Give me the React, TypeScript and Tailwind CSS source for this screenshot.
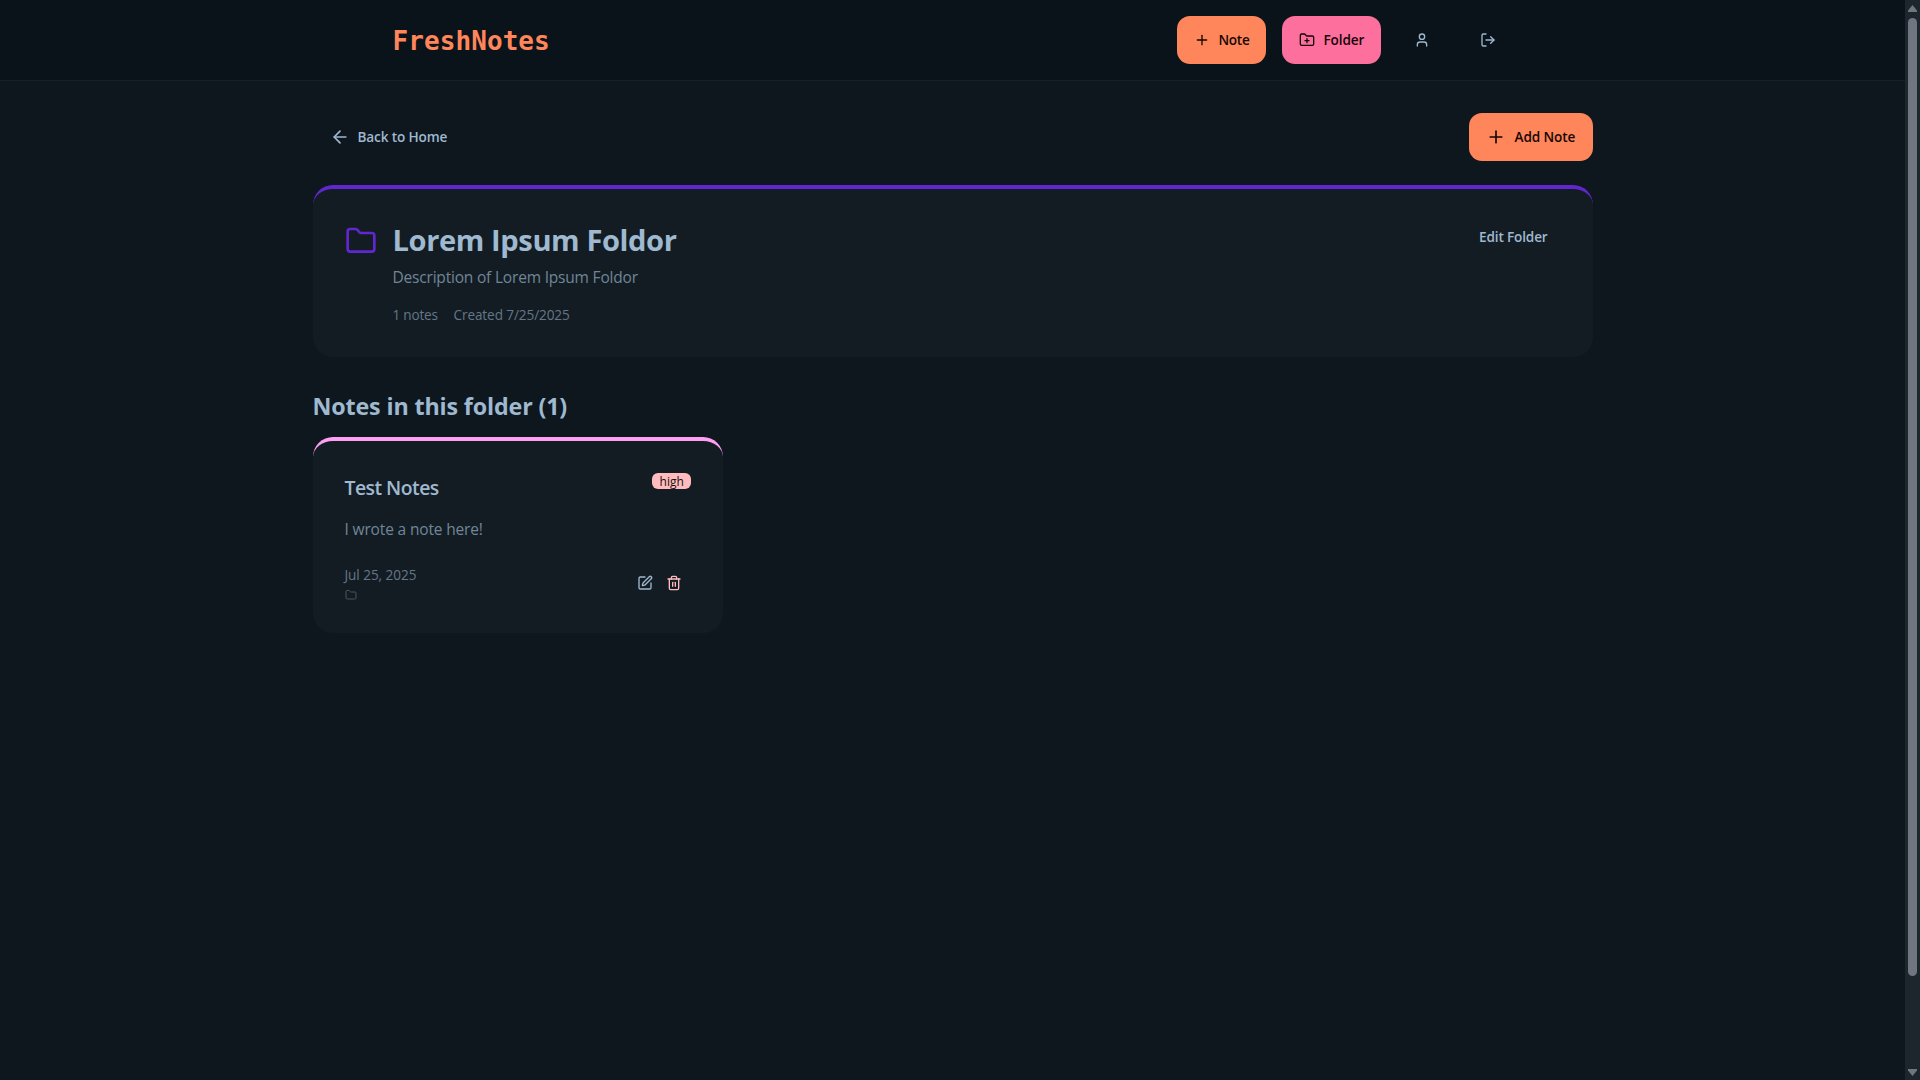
import { ArrowLeft, Folder, FolderPlus, LogOut, Plus, SquarePen, Trash2, User } from "lucide-react";

function Header() {
  return (
    <header className="h-[81px] border-b border-[#14232a] bg-[#091319]">
      <div className="mx-auto flex h-20 w-[1152px] items-center justify-between px-4">
        <h1 className="pt-[3px] font-['DejaVu_Sans_Mono',monospace] text-[26px] font-bold tracking-[0.08px] text-[#ff865b]">FreshNotes</h1>
        <nav className="flex items-center gap-4">
          <button className="flex h-12 w-[89px] items-center gap-2.5 rounded-[13px] bg-[#ff865b] pl-[17px] text-[13.58px] font-semibold text-[#160603]">
            <Plus className="size-4 shrink-0" />
            <span className="-ml-px tracking-[-0.3px]">Note</span>
          </button>
          <button className="flex h-12 w-[99px] items-center gap-[9px] rounded-[13px] bg-[#fd6f9c] pl-[17px] text-[13.58px] font-semibold text-[#160409]">
            <FolderPlus className="size-4 shrink-0" />
            <span className="tracking-[-0.12px]">Folder</span>
          </button>
          <button className="flex h-12 w-[50px] items-center justify-center text-[#9fb9d0]">
            <User className="size-4" />
          </button>
          <button className="flex h-12 w-[50px] items-center justify-center text-[#9fb9d0]">
            <LogOut className="size-4" />
          </button>
        </nav>
      </div>
    </header>
  );
}

function FolderCard() {
  return (
    <section className="mt-6 flex h-[172px] items-start justify-between rounded-[20px] border-t-4 border-[#5f27cd] bg-[#141c23] px-8 pt-8">
      <div className="flex items-start gap-4">
        <Folder className="mt-1 size-8 text-[#5f27cd]" />
        <div>
          <h2 className="mt-px text-[29.1px] leading-9 font-bold tracking-[-0.4px]">Lorem Ipsum Foldor</h2>
          <p className="mt-[7px] text-[15.52px] leading-6 tracking-[-0.2px] text-[#6f8698]">Description of Lorem Ipsum Foldor</p>
          <div className="mt-4 flex gap-4 text-[13.58px] leading-5 whitespace-nowrap text-[#637788]">
            <span className="w-[45px] tracking-[-0.21px]">1 notes</span>
            <span className="tracking-[-0.1px]">Created 7/25/2025</span>
          </div>
        </div>
      </div>
      <button className="h-8 pr-[13px] pl-3 text-[13.58px] font-semibold tracking-[-0.16px]">Edit Folder</button>
    </section>
  );
}

function NoteCard() {
  return (
    <article className="h-[196px] rounded-[20px] border-t-4 border-[#ff9ff3] bg-[#141c23] px-8 pt-8">
      <div className="flex items-start justify-between">
        <h3 className="mt-px text-[19.4px] leading-7 font-semibold tracking-[-0.54px]">Test Notes</h3>
        <span className="flex h-4 w-[39px] items-center justify-center rounded-md bg-[#ffbbbd] pt-0.5 text-[12px] leading-4 text-[#16100d]">high</span>
      </div>
      <p className="mt-[15px] text-[15.52px] leading-6 tracking-[-0.16px] text-[#6f8698]">I wrote a note here!</p>
      <div className="mt-6 flex items-center justify-between">
        <div className="text-[13.58px] leading-5 tracking-[-0.06px] text-[#637788]">
          <div>Jul 25, 2025</div>
          <Folder className="mt-1 size-3 text-[#46545f]" />
        </div>
        <div className="flex gap-[13px] pr-[9px]">
          <SquarePen className="size-4 text-[#9fb9d0]" />
          <Trash2 className="size-4 text-[#ffbbbd]" />
        </div>
      </div>
    </article>
  );
}

function Scrollbar() {
  return (
    <aside className="flex w-[15px] shrink-0 flex-col items-center justify-between bg-[#1d262d] pt-[5px] pb-1 text-[#6f7680]">
      <svg className="h-[7px] w-[9px]" viewBox="0 0 9 7" fill="currentColor"><path d="M4.5 0L9 5.5V7H0V5.5Z" /></svg>
      <div className="mt-1.5 mb-auto h-[958px] w-[9px] rounded-full bg-[#6f7680]" />
      <svg className="h-[7px] w-[9px]" viewBox="0 0 9 7" fill="currentColor"><path d="M4.5 7L9 1.5V0H0V1.5Z" /></svg>
    </aside>
  );
}

export default function App() {
  return (
    <div className="flex h-[1080px] w-[1920px] overflow-hidden bg-[#0e171e] font-['Open_Sans',sans-serif] text-[#9fb9d0]">
      <div className="flex-1">
        <Header />
        <main className="mx-auto w-[1280px] pt-8">
          <div className="flex items-center justify-between">
            <button className="flex h-12 items-center gap-2 pl-[17px] text-[13.58px] font-semibold">
              <ArrowLeft className="size-5" />
              <span className="tracking-[-0.14px]">Back to Home</span>
            </button>
            <button className="flex h-12 w-[124px] items-center gap-[9px] rounded-[13px] bg-[#ff865b] pl-[17px] text-[13.58px] font-semibold text-[#160603]">
              <Plus className="size-5 shrink-0" />
              <span className="tracking-[-0.1px]">Add Note</span>
            </button>
          </div>
          <FolderCard />
          <h2 className="mt-[33px] mb-[15px] text-[23.28px] leading-8 font-bold tracking-[-0.14px]">Notes in this folder (1)</h2>
          <div className="grid grid-cols-3 gap-6">
            <NoteCard />
          </div>
        </main>
      </div>
      <Scrollbar />
    </div>
  );
}
